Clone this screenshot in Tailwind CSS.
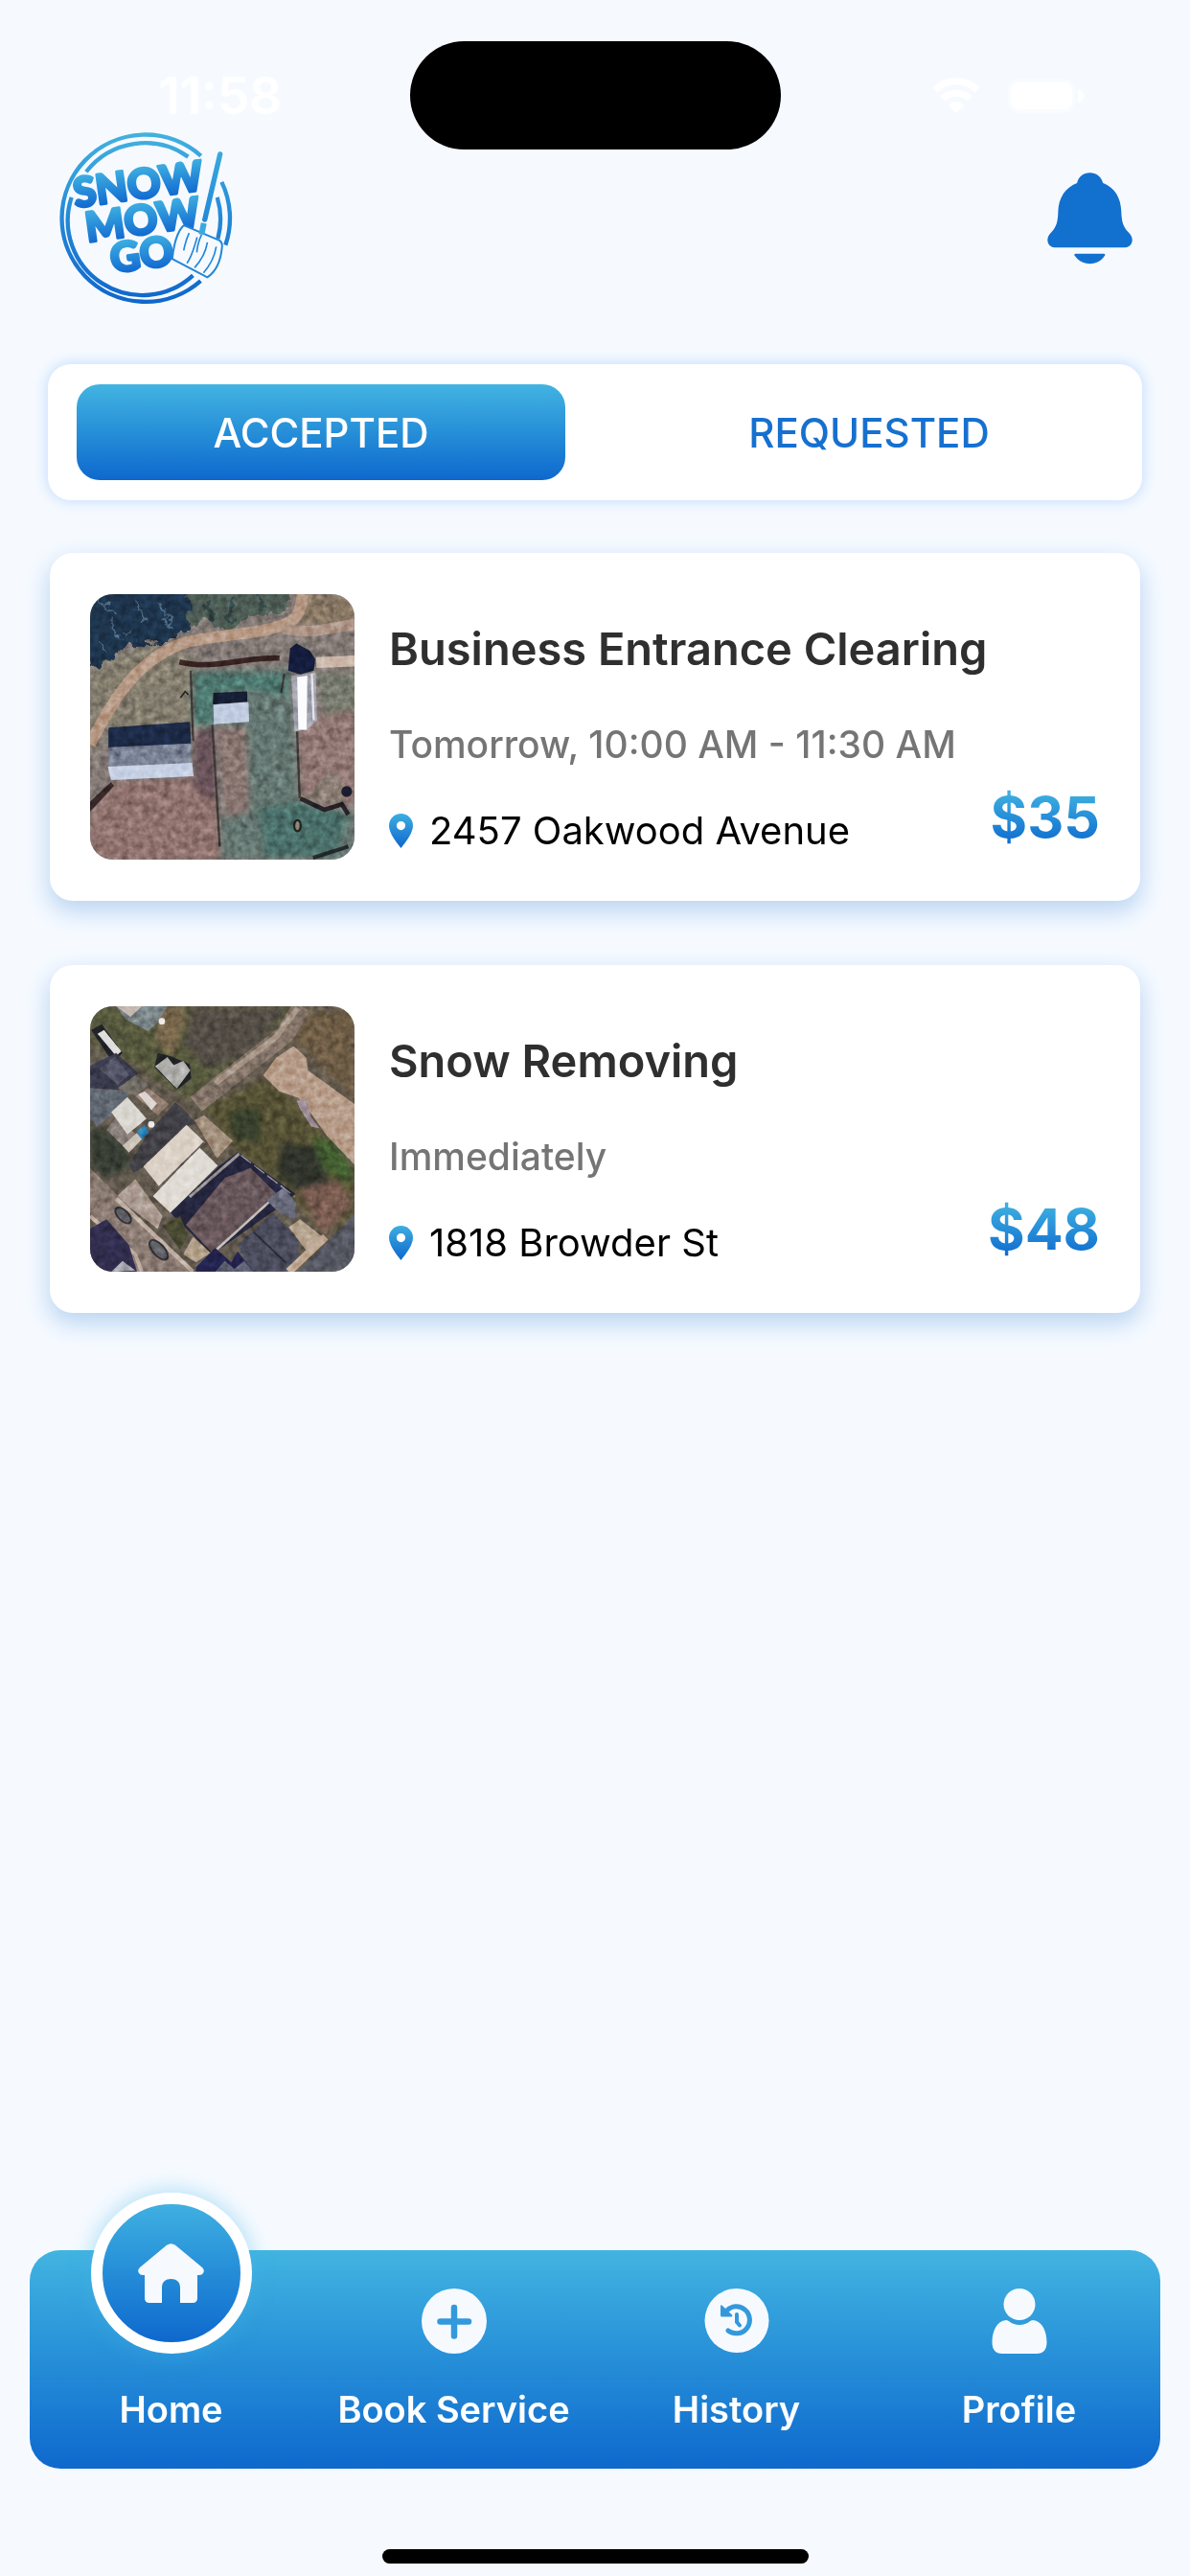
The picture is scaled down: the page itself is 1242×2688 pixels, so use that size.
<!DOCTYPE html>
<html lang="en">
<head>
<meta charset="utf-8">
<meta name="viewport" content="width=device-width, initial-scale=1">
<title>Snow Mow Go</title>
<script src="https://cdn.jsdelivr.net/npm/@tailwindcss/browser@4"></script>
</head>
<body class="flex min-h-screen flex-col bg-[#f6faff] font-['Inter',sans-serif] text-black">

<!-- Status bar -->
<div class="grid grid-cols-[1fr_387px_1fr] items-center pt-[43px] text-white">
  <div class="pl-8 text-center text-[53px] leading-[60px] font-semibold">11:58</div>
  <div class="h-[113px] rounded-full bg-black"></div>
  <div class="flex items-center justify-center gap-7 pl-12">
    <svg class="h-[38px] w-[50px]" viewBox="0 0 50 38" fill="none" stroke="currentColor" stroke-width="7" aria-label="Wi-Fi"><path d="M3 13a31 31 0 0 1 44 0M11 22a20 20 0 0 1 28 0"/><path d="M25 37l-8-8a11 11 0 0 1 16 0z" fill="currentColor" stroke="none"/></svg>
    <svg class="h-[38px] w-[80px]" viewBox="0 0 80 38" aria-label="Battery"><rect x="1" y="1" width="70" height="36" rx="12" fill="#fff" fill-opacity=".4"/><rect x="4" y="5" width="64" height="28" rx="8" fill="#fff"/><path d="M74 13a6 6 0 0 1 0 12z" fill="#fff"/></svg>
  </div>
</div>

<header class="-mt-5 flex items-center justify-between px-[60px]">
  <a href="#" aria-label="Snow Mow Go">
    <svg class="size-[183px]" viewBox="90 345 550 550" fill="none">
      <defs>
        <linearGradient id="ring" gradientUnits="userSpaceOnUse" x1="0" y1="350" x2="0" y2="890"><stop stop-color="#43b2de"/><stop offset=".5" stop-color="#2389d8"/><stop offset="1" stop-color="#0f66cb"/></linearGradient>
        <linearGradient id="word" x1="0" y1="0" x2="0" y2="1"><stop offset=".15" stop-color="#3fb1e2"/><stop offset=".85" stop-color="#126ad0"/></linearGradient>
      </defs>
      <g stroke="url(#ring)" stroke-width="13">
        <path d="M540 425A262 262 0 1 0 539 817"/>
        <path d="M605 507A262 262 0 0 1 617 705"/>
        <path d="M500 428A234 234 0 0 0 180 475M134 555A234 234 0 0 0 515 800M591 555A234 234 0 0 1 593 685"/>
      </g>
      <g fill="url(#word)" stroke="url(#word)" stroke-width="9" stroke-linejoin="round" font-family="Lato, sans-serif" font-weight="900" font-size="129">
        <text transform="translate(146 588) rotate(-8)">SNOW</text>
        <text transform="translate(184 696) rotate(-8)">MOW</text>
        <text transform="translate(262 793) rotate(-8)">GO</text>
      </g>
      <path d="M600 420L552 625" stroke="#f6faff" stroke-width="32"/>
      <path d="M600 420L552 625" stroke="url(#ring)" stroke-width="16" stroke-linecap="round"/>
      <path d="M492 645L598 690Q608 696 606 712C602 756 584 790 560 806L450 748C454 710 464 668 482 647Q486 642 492 645Z" fill="#f6faff" stroke="#2387d8" stroke-width="6"/>
      <path d="M549 636L542 672" stroke="#3aa8df" stroke-width="18"/>
      <path d="M542 672Q530 695 527 728M503 667Q492 690 486 722M528 680Q512 740 496 762M560 696Q554 738 520 776M588 710Q580 756 548 792" stroke="#2387d8" stroke-width="5"/>
    </svg>
  </a>
  <button type="button" aria-label="Notifications">
    <svg class="h-[97px] w-[89px]" viewBox="580 475 266 290" fill="#1270cf"><path d="M673 511C678 490 694 479 713 479S748 490 754 511C791 525 810 558 811 600C812 632 817 648 833 664C842 673 846 681 845 691C844 703 835 712 822 712H604C591 712 582 703 581 691C580 681 584 673 593 664C609 648 613 632 614 600C615 558 636 525 673 511Z"/><path d="M668 731H757Q762 731 760 736C751 752 734 763 713 763S675 752 665 736Q663 731 668 731Z"/></svg>
  </button>
</header>

<main>
  <div class="mx-[50px] mt-[61px] flex gap-[62px] rounded-[24px] bg-white px-[30px] py-[21px] shadow-[0_0_14px_2px_#c8dffd]" role="tablist">
    <button type="button" role="tab" aria-selected="true" class="h-[100px] flex-1 rounded-[24px] bg-linear-to-b from-[#42b4e1] to-[#0f68cd] text-[42px] font-medium text-white">ACCEPTED</button>
    <button type="button" role="tab" aria-selected="false" class="h-[100px] flex-1 rounded-[24px] text-[42px] font-medium text-[#1670cf]">REQUESTED</button>
  </div>

  <div class="mx-[52px] mt-[55px] flex flex-col gap-[67px]">
    <article class="flex gap-9 rounded-[24px] bg-white px-[42px] py-[43px] shadow-[0_10px_24px_2px_#bcd6f2]">
      <svg class="h-[277px] w-[276px] shrink-0 rounded-[24px]" viewBox="192 181 828 830" preserveAspectRatio="xMidYMid slice" role="img" aria-label="Aerial view of 2457 Oakwood Avenue">
        <defs>
          <filter id="grain" x="0" y="0" width="100%" height="100%" color-interpolation-filters="sRGB"><feTurbulence type="fractalNoise" baseFrequency=".045" numOctaves="5" seed="4"/><feColorMatrix values=".9 .5 0 0 -.14  .9 .5 0 0 -.14  .9 .5 0 0 -.14  0 0 0 0 1"/></filter>
          <filter id="rough"><feTurbulence type="fractalNoise" baseFrequency=".03" numOctaves="3" seed="2"/><feDisplacementMap in="SourceGraphic" scale="60" xChannelSelector="R" yChannelSelector="G"/></filter>
          <filter id="soft"><feGaussianBlur stdDeviation="9"/></filter>
        </defs>
        <rect x="192" y="181" width="828" height="830" fill="#7c736f"/>
        <g filter="url(#soft)">
          <path d="M192 400L420 330L520 380L510 610L250 600L192 700Z" fill="#7d7769"/>
          <path d="M505 420L820 410L835 620L850 820L1020 860V1011H600L590 590H510Z" fill="#60716c"/>
          <path d="M520 430H810V500L700 480L580 490V590H515Z" fill="#4a726b"/>
          <path d="M590 595H680L690 860L610 880Z" fill="#836f6c"/>
          <path d="M720 850L850 830L1000 870L960 1000L740 1005Z" fill="#466b65"/>
          <path d="M845 610L940 540L1020 520V840L850 815Z" fill="#8b726e"/>
          <path d="M895 430H1020V540L930 560Z" fill="#707368"/>
          <path d="M192 870L265 765L520 755V620L580 600L600 1011H192Z" fill="#8a6d69"/>
          <path d="M520 620L580 600L590 830L520 800Z" fill="#655057"/>
          <path d="M850 181H1020V270L850 280Z" fill="#82725f"/>
        </g>
        <g filter="url(#rough)">
          <path d="M170 160H520L500 290L430 330L330 340L190 420Z" fill="#1e3048"/>
          <path d="M500 160H830L800 240L680 250L620 300L560 260L500 280Z" fill="#4a5851"/>
          <path d="M220 200l50 40M340 200l20 60M260 270l20 50M420 220l20 60M210 340l30 20M300 310l20 -30" stroke="#445f76" stroke-width="9"/>
          <path d="M560 200l20 60M640 190l-20 80M720 190l10 40" stroke="#2d3f40" stroke-width="18"/>
        </g>
        <path d="M192 650C270 500 340 390 480 335C620 300 720 310 800 275C850 260 850 220 858 181" fill="none" stroke="#b3947f" stroke-width="36"/>
        <path d="M800 288C880 310 950 285 1020 275" fill="none" stroke="#a98f80" stroke-width="34"/>
        <path d="M900 395L1020 390" stroke="#c9b4a6" stroke-width="34"/>
        <path d="M472 393C580 420 680 375 785 381" fill="none" stroke="#33201f" stroke-width="17"/>
        <path d="M507 420L515 640M575 590L598 970M800 430L790 490M840 610L848 820" fill="none" stroke="#3c3434" stroke-width="7"/>
        <path d="M475 505L490 485L500 495" fill="none" stroke="#222" stroke-width="5"/>
        <path d="M250 598L505 580L508 652L250 662Z" fill="#1b2843"/>
        <path d="M252 660L508 648V710L250 720Z" fill="#737b8e"/>
        <path d="M248 720L512 708L516 750L258 762Z" fill="#c3cee3"/>
        <path d="M578 490L684 485V518L576 526Z" fill="#151d31"/><path d="M578 526L688 518L690 580L580 588Z" fill="#bdc8de"/>
        <path d="M822 436L898 426L902 575L870 605L832 610Z" fill="#9b9ca9"/><path d="M840 440L872 436L870 605L844 605Z" fill="#fcfbfd"/><path d="M886 430L892 575" stroke="#e4e3ec" stroke-width="7"/>
        <path d="M812 420L818 350L838 335L880 358L897 385L892 420L850 432Z" fill="#131b3a"/>
        <path d="M192 830L258 768L268 780L192 862Z" fill="#352626"/>
        <path d="M870 815L935 735L980 760L990 825L925 850Z" fill="#85786f"/>
        <path d="M850 820L925 855L980 838L1000 870" fill="none" stroke="#231d22" stroke-width="14"/>
        <circle cx="995" cy="798" r="17" fill="#191b2d"/>
        <ellipse cx="841" cy="905" rx="10" ry="17" fill="#8f8372" stroke="#1c211f" stroke-width="7"/>
        <path d="M890 1005L1000 970" stroke="#22282a" stroke-width="12"/>
        <rect x="192" y="181" width="828" height="830" filter="url(#grain)" class="mix-blend-overlay" opacity=".4"/>
      </svg>
      <div class="flex min-w-0 flex-1 flex-col pt-[27px]">
        <h2 class="text-[47px] leading-[60px] font-semibold text-[#2f2f2f]">Business Entrance Clearing</h2>
        <p class="mt-10 text-[39px] leading-[60px] font-medium text-[#757575]">Tomorrow, 10:00 AM - 11:30 AM</p>
        <div class="mt-auto flex items-end justify-between">
          <p class="flex items-center gap-[17px] text-[40px] leading-[60px]">
            <svg class="h-9 w-[25px]" viewBox="0 0 25 36" aria-hidden="true"><defs><linearGradient id="pin" x1="0" y1="0" x2="0" y2="1"><stop stop-color="#3daee1"/><stop offset="1" stop-color="#0f67cd"/></linearGradient></defs><path fill="url(#pin)" fill-rule="evenodd" d="M12.500 0C5.500 0 0 5.500 0 12.500C0 20 7 29 12.500 36C18 29 25 20 25 12.500C25 5.500 19.500 0 12.500 0ZM12.500 8A4.600 4.600 0 1 1 12.500 17.200A4.600 4.600 0 1 1 12.500 8Z"/></svg>
            2457 Oakwood Avenue
          </p>
          <p class="mb-[14px] bg-linear-to-b from-[#42b4e1] to-[#0f68cd] bg-clip-text text-[59px] leading-[60px] font-bold text-transparent">$35</p>
        </div>
      </div>
    </article>

    <article class="flex gap-9 rounded-[24px] bg-white px-[42px] py-[43px] shadow-[0_10px_24px_2px_#bcd6f2]">
      <svg class="h-[277px] w-[276px] shrink-0 rounded-[24px]" viewBox="188 184 828 830" preserveAspectRatio="xMidYMid slice" role="img" aria-label="Aerial view of 1818 Browder St">
        <rect x="188" y="184" width="828" height="830" fill="#5d554a"/>
        <g filter="url(#soft)">
          <path d="M188 184H840L500 480L330 370L188 300Z" fill="#53543a"/>
          <path d="M510 190H800L680 330L560 380L480 300Z" fill="#4f4a42"/>
          <path d="M400 184L490 200L450 340L400 300Z" fill="#756348"/>
          <path d="M870 200H1016V480L850 310L820 300Z" fill="#695943"/>
          <path d="M540 500L740 410L830 480L1016 690V840L920 900L780 740L640 630Z" fill="#514e33"/>
          <path d="M790 610L900 620L940 740L830 760L770 700Z" fill="#2f322a"/>
          <path d="M620 510L720 500L720 610L640 600Z" fill="#353c2a"/>
          <path d="M840 760L960 730L1010 800L920 900Z" fill="#75594e"/>
          <path d="M188 550L300 610L320 680L250 720L188 690Z" fill="#343a31"/>
          <path d="M880 590L960 610L1010 700L1000 740L920 690Z" fill="#3f5a2d"/>
        </g>
        <path d="M850 184L800 270L520 490" fill="none" stroke="#7d6e63" stroke-width="58"/>
        <path d="M838 190L770 280L580 425" fill="none" stroke="#a39283" stroke-width="18"/>
        <path d="M730 400L770 345L825 308L865 345L870 385L1016 490V680L930 590L880 520L840 470L780 450Z" fill="#b39783"/>
        <path d="M835 480L865 475L880 530L905 565L880 560L845 505Z" fill="#988891"/>
        <path d="M270 184H430L400 235L370 262L300 225Z" fill="#737d80"/><path d="M270 184H350L315 218Z" fill="#c2b6ae"/><circle cx="413" cy="231" r="10" fill="#ece6de"/>
        <path d="M192 258L225 240L290 330L260 360Z" fill="#1f2127"/><path d="M212 270L232 258L286 325L270 340Z" fill="#dedcd9"/>
        <path d="M188 370L270 330L340 395L280 445L188 440Z" fill="#373849"/><path d="M218 380L268 340L310 400L275 430Z" fill="#4f5061"/>
        <path d="M188 440L310 450L300 490L210 560L188 530Z" fill="#5c636d"/><path d="M275 440L330 400L370 430L330 465Z" fill="#6b675f"/>
        <path d="M390 375L400 330L440 340L500 365L505 410L460 445Z" fill="#1e2225"/><path d="M392 372L430 343L450 368L480 355L502 385L460 442Z" fill="#aaa9a6"/>
        <path d="M330 465L370 440L435 490L400 525Z" fill="#8e796d"/><path d="M340 460L360 450L398 488L380 508Z" fill="#ddd3d0"/>
        <path d="M240 570L270 530L340 590L300 630Z" fill="#867b77"/>
        <path d="M255 515L305 468L365 535L305 585Z" fill="#d9d5cf"/>
        <path d="M290 620L335 580L350 600L310 642Z" fill="#c7bdb0"/>
        <path d="M370 580L455 485L475 500L520 550L490 560L350 690L325 705L310 680Z" fill="#3e3d43"/>
        <path d="M335 575L360 555L372 580L350 600Z" fill="#287bb5"/><circle cx="380" cy="553" r="10" fill="#e8ebed"/>
        <path d="M515 540L545 525L635 605L585 660Z" fill="#9f8b78"/>
        <path d="M355 685L490 555L548 610L405 748Z" fill="#dacfc3"/><path d="M385 778L530 625L588 682L440 830Z" fill="#dfdad3"/>
        <path d="M405 748L545 610" stroke="#595452" stroke-width="5"/>
        <path d="M440 830L590 685L650 640L830 770L800 800L740 840L570 960L490 880Z" fill="#23243b"/>
        <path d="M500 780L655 645" stroke="#96908e" stroke-width="9"/>
        <path d="M488 868L610 720L690 690L770 768L570 955Z" fill="#625256"/>
        <path d="M570 958L760 785" stroke="#c3bab3" stroke-width="8"/>
        <path d="M740 790L795 750L832 800L830 850L780 830Z" fill="#636575"/>
        <path d="M650 930L760 830L840 910V970L800 1014H690Z" fill="#474857"/><path d="M700 890L800 985" stroke="#262837" stroke-width="5"/>
        <path d="M520 1000L580 940L630 985L650 950L700 1014H520Z" fill="#21214a"/><path d="M580 1014L610 980L640 1005L670 980L700 1014Z" fill="#595c6d"/>
        <path d="M270 780L330 725L415 840L400 880Z" fill="#a7968c"/>
        <path d="M188 690L290 790L500 1014H320L188 830Z" fill="#83746c"/><path d="M270 785L510 1014" stroke="#bcab9d" stroke-width="13"/><path d="M188 840L330 960L350 1014" fill="none" stroke="#bca79a" stroke-width="12"/>
        <path d="M188 880L240 850L310 930L335 1014H188Z" fill="#2f2b4a"/><path d="M255 1014L290 980L330 1010Z" fill="#a4a4ae"/>
        <path d="M480 960L510 905L565 955L520 985Z" fill="#b09e86"/><path d="M415 870L470 840L495 900L470 945Z" fill="#45462f"/>
        <g fill="#5b5c61" stroke="#302f35" stroke-width="6"><ellipse cx="292" cy="838" rx="31" ry="16" transform="rotate(45 292 838)"/><ellipse cx="403" cy="946" rx="38" ry="18" transform="rotate(48 403 946)"/></g>
        <path d="M810 875L845 850L915 905L870 955Z" fill="#b4a18c"/>
        <path d="M840 1014L1016 835V1014Z" fill="#51535d"/><path d="M810 1014L925 905" stroke="#bca48e" stroke-width="24"/>
        <path d="M660 650L830 780" stroke="#8a8790" stroke-width="4" stroke-dasharray="40 12"/>
        <rect x="188" y="184" width="828" height="830" filter="url(#grain)" class="mix-blend-overlay" opacity=".4"/>
      </svg>
      <div class="flex min-w-0 flex-1 flex-col pt-[27px]">
        <h2 class="text-[47px] leading-[60px] font-semibold text-[#2f2f2f]">Snow Removing</h2>
        <p class="mt-10 text-[39px] leading-[60px] font-medium text-[#757575]">Immediately</p>
        <div class="mt-auto flex items-end justify-between">
          <p class="flex items-center gap-[17px] text-[40px] leading-[60px]">
            <svg class="h-9 w-[25px]" viewBox="0 0 25 36" aria-hidden="true"><path fill="url(#pin)" fill-rule="evenodd" d="M12.500 0C5.500 0 0 5.500 0 12.500C0 20 7 29 12.500 36C18 29 25 20 25 12.500C25 5.500 19.500 0 12.500 0ZM12.500 8A4.600 4.600 0 1 1 12.500 17.200A4.600 4.600 0 1 1 12.500 8Z"/></svg>
            1818 Browder St
          </p>
          <p class="mb-[14px] bg-linear-to-b from-[#42b4e1] to-[#0f68cd] bg-clip-text text-[59px] leading-[60px] font-bold text-transparent">$48</p>
        </div>
      </div>
    </article>
  </div>
</main>

<footer class="mt-auto flex flex-col pb-[13px]">
  <nav class="mx-[31px] grid grid-cols-4 rounded-[32px] bg-linear-to-b from-[#42b4e1] to-[#0f68cd] pt-10 pb-[38px] text-[38px] leading-[48px] font-semibold text-white">
    <a href="#" aria-current="page" class="flex flex-col items-center gap-[34px]">
      <span class="flex h-[68px] items-end">
        <span class="flex size-[168px] items-center justify-center rounded-full border-12 border-white bg-linear-to-b from-[#3fb0e1] to-[#0f68cd] shadow-[0_0_22px_2px_#43b5e666]">
          <svg class="h-[62px] w-[69px]" viewBox="0 0 69 62" fill="#f6faff" aria-hidden="true"><path d="M30 1.800Q34.500-1.500 39 1.800L67 25Q70 28 68 31Q67 33 64 33H62V57Q62 62 57 62H44V46C44 40 40 37 34.500 37S25 40 25 46V62H12Q7 62 7 57V33H5Q2 33 1 31Q-1 28 2 25Z"/></svg>
        </span>
      </span>
      Home
    </a>
    <a href="#" class="flex flex-col items-center gap-[34px]">
      <svg class="size-[68px]" viewBox="0 0 68 68" aria-hidden="true"><circle cx="34" cy="34" r="34" fill="#f6faff"/><path d="M34 20V49.500M19.500 34.500H49" stroke="#3399dc" stroke-width="6.500" stroke-linecap="round"/></svg>
      Book Service
    </a>
    <a href="#" class="flex flex-col items-center gap-[34px]">
      <svg class="size-[68px]" viewBox="0 0 68 68" fill="none" aria-hidden="true"><circle cx="34" cy="33.500" r="33.500" fill="#f6faff"/><path d="M23 23.500A14 14 0 1 1 25 44" stroke="#3399dc" stroke-width="5" stroke-linecap="round"/><path d="M17 18.500Q17 16.500 19 18L29 27.500Q30 29.500 28 29.500H18.500Q17 29.500 17 28Z" fill="#3399dc"/><path d="M34 27V35L37 38.500" stroke="#3399dc" stroke-width="4" stroke-linecap="round"/></svg>
      History
    </a>
    <a href="#" class="flex flex-col items-center gap-[34px]">
      <svg class="size-[68px]" viewBox="0 0 68 68" fill="#f6faff" aria-hidden="true"><circle cx="34" cy="16.500" r="16.500"/><path d="M20 33Q22 33 23.500 34.500C29 39 39 39 44.500 34.500Q46 33 48 33C58 34 62.500 45 62.500 56C62.500 64 59 68 52 68H16C9 68 5.500 64 5.500 56C5.500 45 10 34 20 33Z"/></svg>
      Profile
    </a>
  </nav>
  <div class="mx-auto mt-[84px] h-[15px] w-[445px] rounded-full bg-black"></div>
</footer>
</body>
</html>
